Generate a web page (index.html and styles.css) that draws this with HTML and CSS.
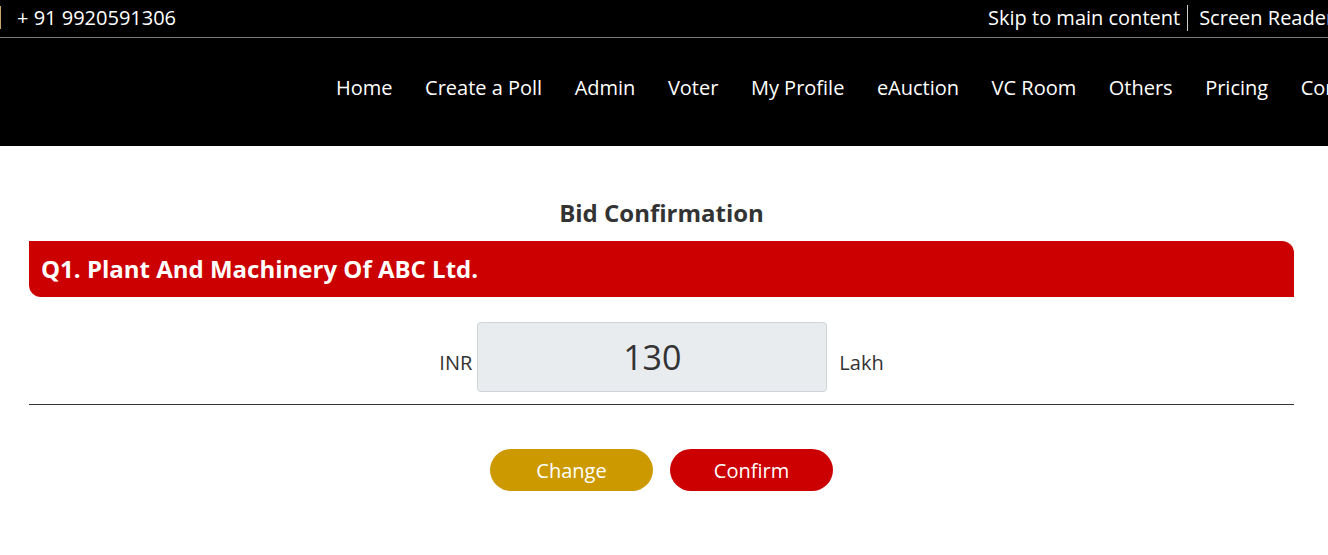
FILE: index.html
```html
<!DOCTYPE html>
<html lang="en">
<head>
<meta charset="utf-8">
<title>Bid Confirmation</title>
<link rel="stylesheet" href="styles.css">
</head>
<body>
<header class="topbar">
  <div class="topbar-left">
    <span class="edge-sep"></span>
    <span class="phone">+ 91 9920591306</span>
  </div>
  <div class="topbar-right">
    <a href="#main" class="top-link">Skip to main content</a>
    <span class="divider"></span>
    <a href="#" class="top-link">Screen Reader Access</a>
  </div>
</header>
<nav class="mainnav">
  <ul class="menu">
    <li><a href="#">Home</a></li>
    <li><a href="#">Create a Poll</a></li>
    <li><a href="#">Admin</a></li>
    <li><a href="#">Voter</a></li>
    <li><a href="#">My Profile</a></li>
    <li><a href="#">eAuction</a></li>
    <li><a href="#">VC Room</a></li>
    <li><a href="#">Others</a></li>
    <li><a href="#">Pricing</a></li>
    <li><a href="#">Contact Us</a></li>
  </ul>
</nav>
<main class="content" id="main">
  <h2 class="title">Bid Confirmation</h2>
  <div class="qbar">Q1. Plant And Machinery Of ABC Ltd.</div>
  <div class="bidrow">
    <span class="unit unit-left">INR</span>
    <input class="amount" type="text" value="130" readonly>
    <span class="unit unit-right">Lakh</span>
  </div>
  <hr class="rule">
  <div class="actions">
    <button class="btn btn-change" type="button">Change</button>
    <button class="btn btn-confirm" type="button">Confirm</button>
  </div>
</main>
</body>
</html>
```

FILE: styles.css
```css
html, body {
  margin: 0;
  padding: 0;
}
body {
  font-family: "Open Sans", "Noto Sans", sans-serif;
  font-size: 20px;
  color: #333;
  background: #fff;
  overflow: hidden;
}
a {
  color: inherit;
  text-decoration: none;
}

/* top bar */
.topbar {
  display: flex;
  align-items: center;
  box-sizing: border-box;
  height: 38px;
  padding-bottom: 2px;
  background: #000;
  color: #fff;
  border-bottom: 1px solid #777;
  white-space: nowrap;
  overflow: hidden;
}
.topbar-left {
  display: flex;
  align-items: center;
  flex-shrink: 0;
}
.edge-sep {
  width: 1px;
  height: 23px;
  background: #c9a56a;
  margin-right: 16px;
}
.phone,
.top-link {
  line-height: 28px;
}
.topbar-right {
  display: flex;
  align-items: center;
  margin-left: 812px;
  flex-shrink: 0;
}
.divider {
  width: 1px;
  height: 26px;
  background: #ccc;
  margin: 0 11px 0 7px;
}

/* nav */
.mainnav {
  background: #000;
  box-sizing: border-box;
  height: 108px;
  padding-bottom: 8px;
  display: flex;
  align-items: center;
  overflow: hidden;
}
.menu {
  list-style: none;
  margin: 0;
  padding: 0 0 0 336px;
  display: flex;
  gap: 32.5px;
  white-space: nowrap;
  flex-shrink: 0;
}
.menu a {
  color: #fff;
  font-size: 20px;
  line-height: 28px;
}

/* content */
.content {
  margin-left: 29px;
  width: 1265px;
}
.title {
  margin: 52px 0 14px;
  text-align: center;
  font-size: 24px;
  font-weight: 700;
  line-height: 29px;
  color: #333;
}
.qbar {
  height: 56px;
  line-height: 56px;
  background: #cc0000;
  color: #fff;
  font-size: 24px;
  font-weight: 700;
  padding-left: 12px;
  border-radius: 0 12px 0 12px;
}
.bidrow {
  display: flex;
  justify-content: center;
  align-items: baseline;
  margin-top: 25px;
}
.unit {
  font-size: 20px;
  color: #333;
}
.unit-left {
  margin-right: 5px;
}
.unit-right {
  margin-left: 12px;
}
.amount {
  box-sizing: border-box;
  width: 350px;
  height: 70px;
  background: #e9ecef;
  border: 1px solid #ced4da;
  border-radius: 4px;
  font-family: "Open Sans", "Noto Sans", sans-serif;
  font-size: 34px;
  color: #333;
  text-align: center;
  padding: 0;
  outline: none;
}
.rule {
  margin: 12px 0 0;
  border: 0;
  border-top: 1px solid #333;
  height: 0;
}
.actions {
  display: flex;
  justify-content: center;
  gap: 17px;
  margin-top: 44px;
}
.btn {
  width: 163px;
  height: 42px;
  border: 0;
  border-radius: 21px;
  color: #fff;
  font-family: "Open Sans", "Noto Sans", sans-serif;
  font-size: 20px;
  padding: 0;
  cursor: pointer;
}
.btn-change {
  background: #cc9900;
}
.btn-confirm {
  background: #cc0000;
}
```
